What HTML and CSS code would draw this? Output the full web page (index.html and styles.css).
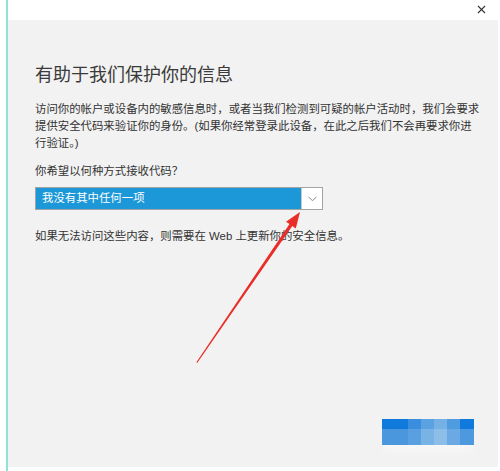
FILE: index.html
```html
<!DOCTYPE html>
<html lang="zh-CN">
<head>
    <meta charset="UTF-8">
    <meta name="viewport" content="width=device-width, initial-scale=1.0">
    <title>有助于我们保护你的信息</title>
    <link rel="stylesheet" href="styles.css">
</head>
<body>
    <div class="frame">
        <div class="titlebar">
            <a href="javascript:;" class="close-btn">
                <svg width="9" height="9" viewBox="0 0 9 9"><path d="M1 1L8 8M8 1L1 8" stroke="#333" stroke-width="1.1" fill="none"/></svg>
            </a>
        </div>
        <div class="content">
            <h1 class="title">有助于我们保护你的信息</h1>
            <p class="desc">访问你的帐户或设备内的敏感信息时，或者当我们检测到可疑的帐户活动时，我们会要求提供安全代码来验证你的身份。(如果你经常登录此设备，在此之后我们不会再要求你进行验证。)</p>
            <p class="label">你希望以何种方式接收代码？</p>
            <div class="select">
                <span class="select-text">我没有其中任何一项</span>
                <span class="select-arrow">
                    <svg width="9" height="6" viewBox="0 0 9 6"><path d="M0.5 0.8L4.5 4.8L8.5 0.8" stroke="#8a8a8a" stroke-width="1" fill="none"/></svg>
                </span>
            </div>
            <p class="note">如果无法访问这些内容，则需要在 Web 上更新你的安全信息。</p>
            <div class="footer">
                <div class="next-btn">
                    <i style="background:#0f79dc"></i><i style="background:#3a8ede"></i><i style="background:#5ba2e2"></i><i style="background:#75b1e5"></i><i style="background:#4f9be0"></i><i style="background:#0f79dc"></i>
                    <i style="background:#4b97de"></i><i style="background:#5aa0e0"></i><i style="background:#78b3e6"></i><i style="background:#8cbee8"></i><i style="background:#6aa9e3"></i><i style="background:#4d98de"></i>
                </div>
            </div>
        </div>
        <!-- 红色箭头标注 -->
        <svg class="arrow" width="500" height="471" viewBox="0 0 500 471">
            <polygon points="196.4,362.3 289.5,224.1 286,221.7 300,212 295.8,228.5 292.3,226.1 197.2,362.9" fill="#ea2d26"/>
        </svg>
    </div>
</body>
</html>
```

FILE: styles.css
```css
* {
    margin: 0;
    padding: 0;
}
body {
    background-color: #fff;
    font-family: "Liberation Sans", "Noto Sans CJK SC", sans-serif;
    color: #333;
}
a {
    text-decoration: none;
}
.frame {
    position: relative;
    display: flex;
    flex-direction: column;
    width: 492px;
    height: 471px;
    margin-left: 6px;
    border-left: 2px solid #8ee4d6;
}
.titlebar {
    display: flex;
    justify-content: flex-end;
    align-items: center;
    height: 20px;
    padding-right: 14px;
}
.close-btn {
    display: flex;
    margin-top: -1px;
}
.content {
    display: flex;
    flex-direction: column;
    flex: 1;
    margin: 0 2px 4px 0;
    padding: 43px 24px 22px 27px;
    background-color: #f2f2f2;
}
.title {
    font-size: 18px;
    font-weight: 400;
    line-height: 24px;
    color: #3a3a3a;
}
.desc {
    width: 445px;
    margin-top: 14px;
    font-size: 11.4px;
    line-height: 17px;
}
.label {
    margin-top: 11px;
    font-size: 11.4px;
    line-height: 17px;
}
.select {
    display: flex;
    width: 288px;
    height: 23px;
    margin-top: 7px;
    border: 1px solid #a3a3a3;
    box-sizing: border-box;
}
.select-text {
    flex: 1;
    padding-left: 6px;
    background-color: #1c98d8;
    color: #fff;
    font-size: 11.4px;
    line-height: 21px;
}
.select-arrow {
    display: flex;
    justify-content: center;
    align-items: center;
    width: 20px;
    background-color: #fff;
    border-left: 1px solid #c8c8c8;
}
.note {
    margin-top: 18px;
    font-size: 11.4px;
    line-height: 17px;
}
.footer {
    display: flex;
    justify-content: flex-end;
    margin-top: auto;
}
.next-btn {
    display: grid;
    grid-template-columns: 26px 13px 13px 13px 13px 14px;
    grid-template-rows: 10px 16px;
    width: 92px;
    height: 26px;
    box-shadow: 0 8px 6px -2px #f7f7f7;
}
.next-btn i {
    display: block;
}
.arrow {
    position: absolute;
    left: -8px;
    top: 0;
    pointer-events: none;
}
```
